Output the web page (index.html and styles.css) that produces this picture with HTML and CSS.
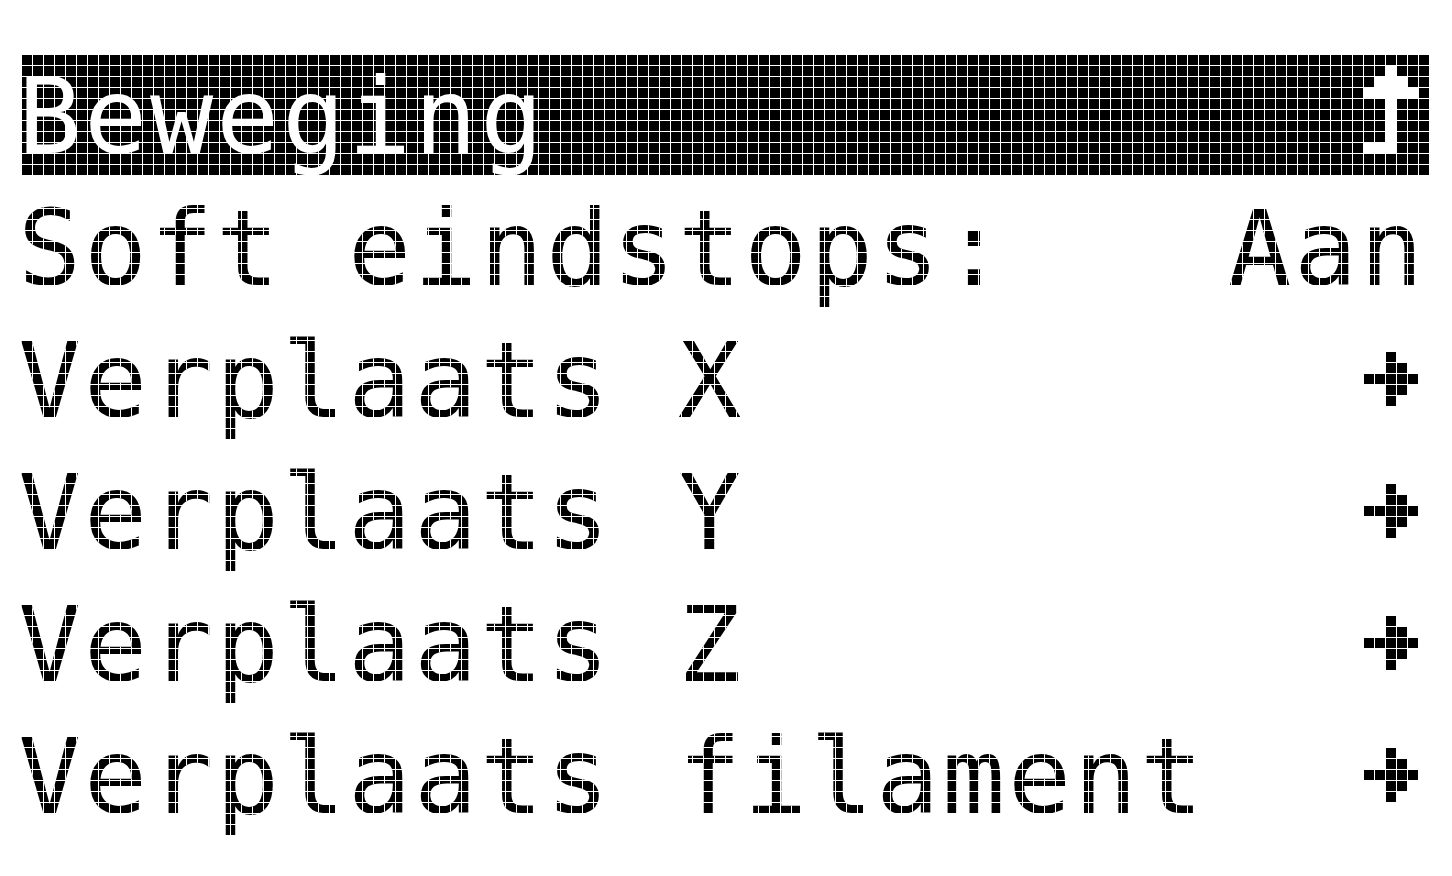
FILE: index.html
```html
<!DOCTYPE html>
<html lang="nl">
<head>
<meta charset="utf-8">
<title>Beweging</title>
<link rel="stylesheet" href="styles.css">
</head>
<body>
<div class="lcd">
  <div class="title">
    <div class="title-text">Beweging</div>
    <svg class="up-icon" width="55" height="88" viewBox="0 0 55 88" aria-hidden="true">
      <g fill="#fff">
        <rect x="22" y="0" width="11" height="11"/>
        <rect x="11" y="11" width="33" height="11"/>
        <rect x="0" y="22" width="55" height="11"/>
        <rect x="22" y="33" width="11" height="44"/>
        <rect x="0" y="77" width="33" height="11"/>
      </g>
    </svg>
  </div>
  <div class="menu">
    <div class="row">
      <div class="dots label">Soft eindstops:</div>
      <div class="dots value">Aan</div>
    </div>
    <div class="row">
      <div class="dots label">Verplaats X</div>
      <svg class="arrow" width="55" height="55" viewBox="0 0 55 55" aria-hidden="true"><path d="M22 0h10v10h-10zM22 11h10v10h-10zM33 11h10v10h-10zM0 22h10v10h-10zM11 22h10v10h-10zM22 22h10v10h-10zM33 22h10v10h-10zM44 22h10v10h-10zM22 33h10v10h-10zM33 33h10v10h-10zM22 44h10v10h-10z"/></svg>
    </div>
    <div class="row">
      <div class="dots label">Verplaats Y</div>
      <svg class="arrow" width="55" height="55" viewBox="0 0 55 55" aria-hidden="true"><path d="M22 0h10v10h-10zM22 11h10v10h-10zM33 11h10v10h-10zM0 22h10v10h-10zM11 22h10v10h-10zM22 22h10v10h-10zM33 22h10v10h-10zM44 22h10v10h-10zM22 33h10v10h-10zM33 33h10v10h-10zM22 44h10v10h-10z"/></svg>
    </div>
    <div class="row">
      <div class="dots label">Verplaats Z</div>
      <svg class="arrow" width="55" height="55" viewBox="0 0 55 55" aria-hidden="true"><path d="M22 0h10v10h-10zM22 11h10v10h-10zM33 11h10v10h-10zM0 22h10v10h-10zM11 22h10v10h-10zM22 22h10v10h-10zM33 22h10v10h-10zM44 22h10v10h-10zM22 33h10v10h-10zM33 33h10v10h-10zM22 44h10v10h-10z"/></svg>
    </div>
    <div class="row">
      <div class="dots label">Verplaats filament</div>
      <svg class="arrow" width="55" height="55" viewBox="0 0 55 55" aria-hidden="true"><path d="M22 0h10v10h-10zM22 11h10v10h-10zM33 11h10v10h-10zM0 22h10v10h-10zM11 22h10v10h-10zM22 22h10v10h-10zM33 22h10v10h-10zM44 22h10v10h-10zM22 33h10v10h-10zM33 33h10v10h-10zM22 44h10v10h-10z"/></svg>
    </div>
  </div>
</div>
</body>
</html>
```
FILE: styles.css
```css
html, body {
  margin: 0;
  padding: 0;
  background: #fff;
}

body {
  width: 1452px;
  height: 876px;
  overflow: hidden;
}

.lcd {
  width: 1408px;
  padding: 55px 0 0 22px;
  font-family: "DejaVu Sans Mono", "Liberation Mono", monospace;
  font-size: 105px;
  letter-spacing: 2.78px;
  line-height: 125px;
}

.title {
  height: 121px;
  display: flex;
  justify-content: space-between;
  align-items: flex-start;
  background-color: #000;
  background-image:
    linear-gradient(to right, transparent 10px, #fff 10px),
    linear-gradient(to bottom, transparent 10px, #fff 10px);
  background-size: 11px 11px;
}

.title-text {
  color: #fff;
  margin-left: -4px;
  white-space: pre;
}

.up-icon {
  display: block;
  margin-top: 11px;
  margin-right: 11px;
}

.menu {
  margin-top: 11px;
  display: flex;
  flex-direction: column;
}

.row {
  height: 132px;
  display: flex;
  justify-content: space-between;
  align-items: flex-start;
}

.dots {
  white-space: pre;
  color: transparent;
  background-color: #000;
  background-image:
    linear-gradient(to right, transparent 10px, #fff 10px),
    linear-gradient(to bottom, transparent 10px, #fff 10px);
  background-size: 11px 11px;
  background-position: 4px 0;
  -webkit-background-clip: text;
  background-clip: text;
}

.label {
  margin-left: -4px;
}

.value {
  margin-right: 4px;
}

.arrow {
  display: block;
  margin-top: 33px;
  margin-right: 11px;
  fill: #000;
}
```
